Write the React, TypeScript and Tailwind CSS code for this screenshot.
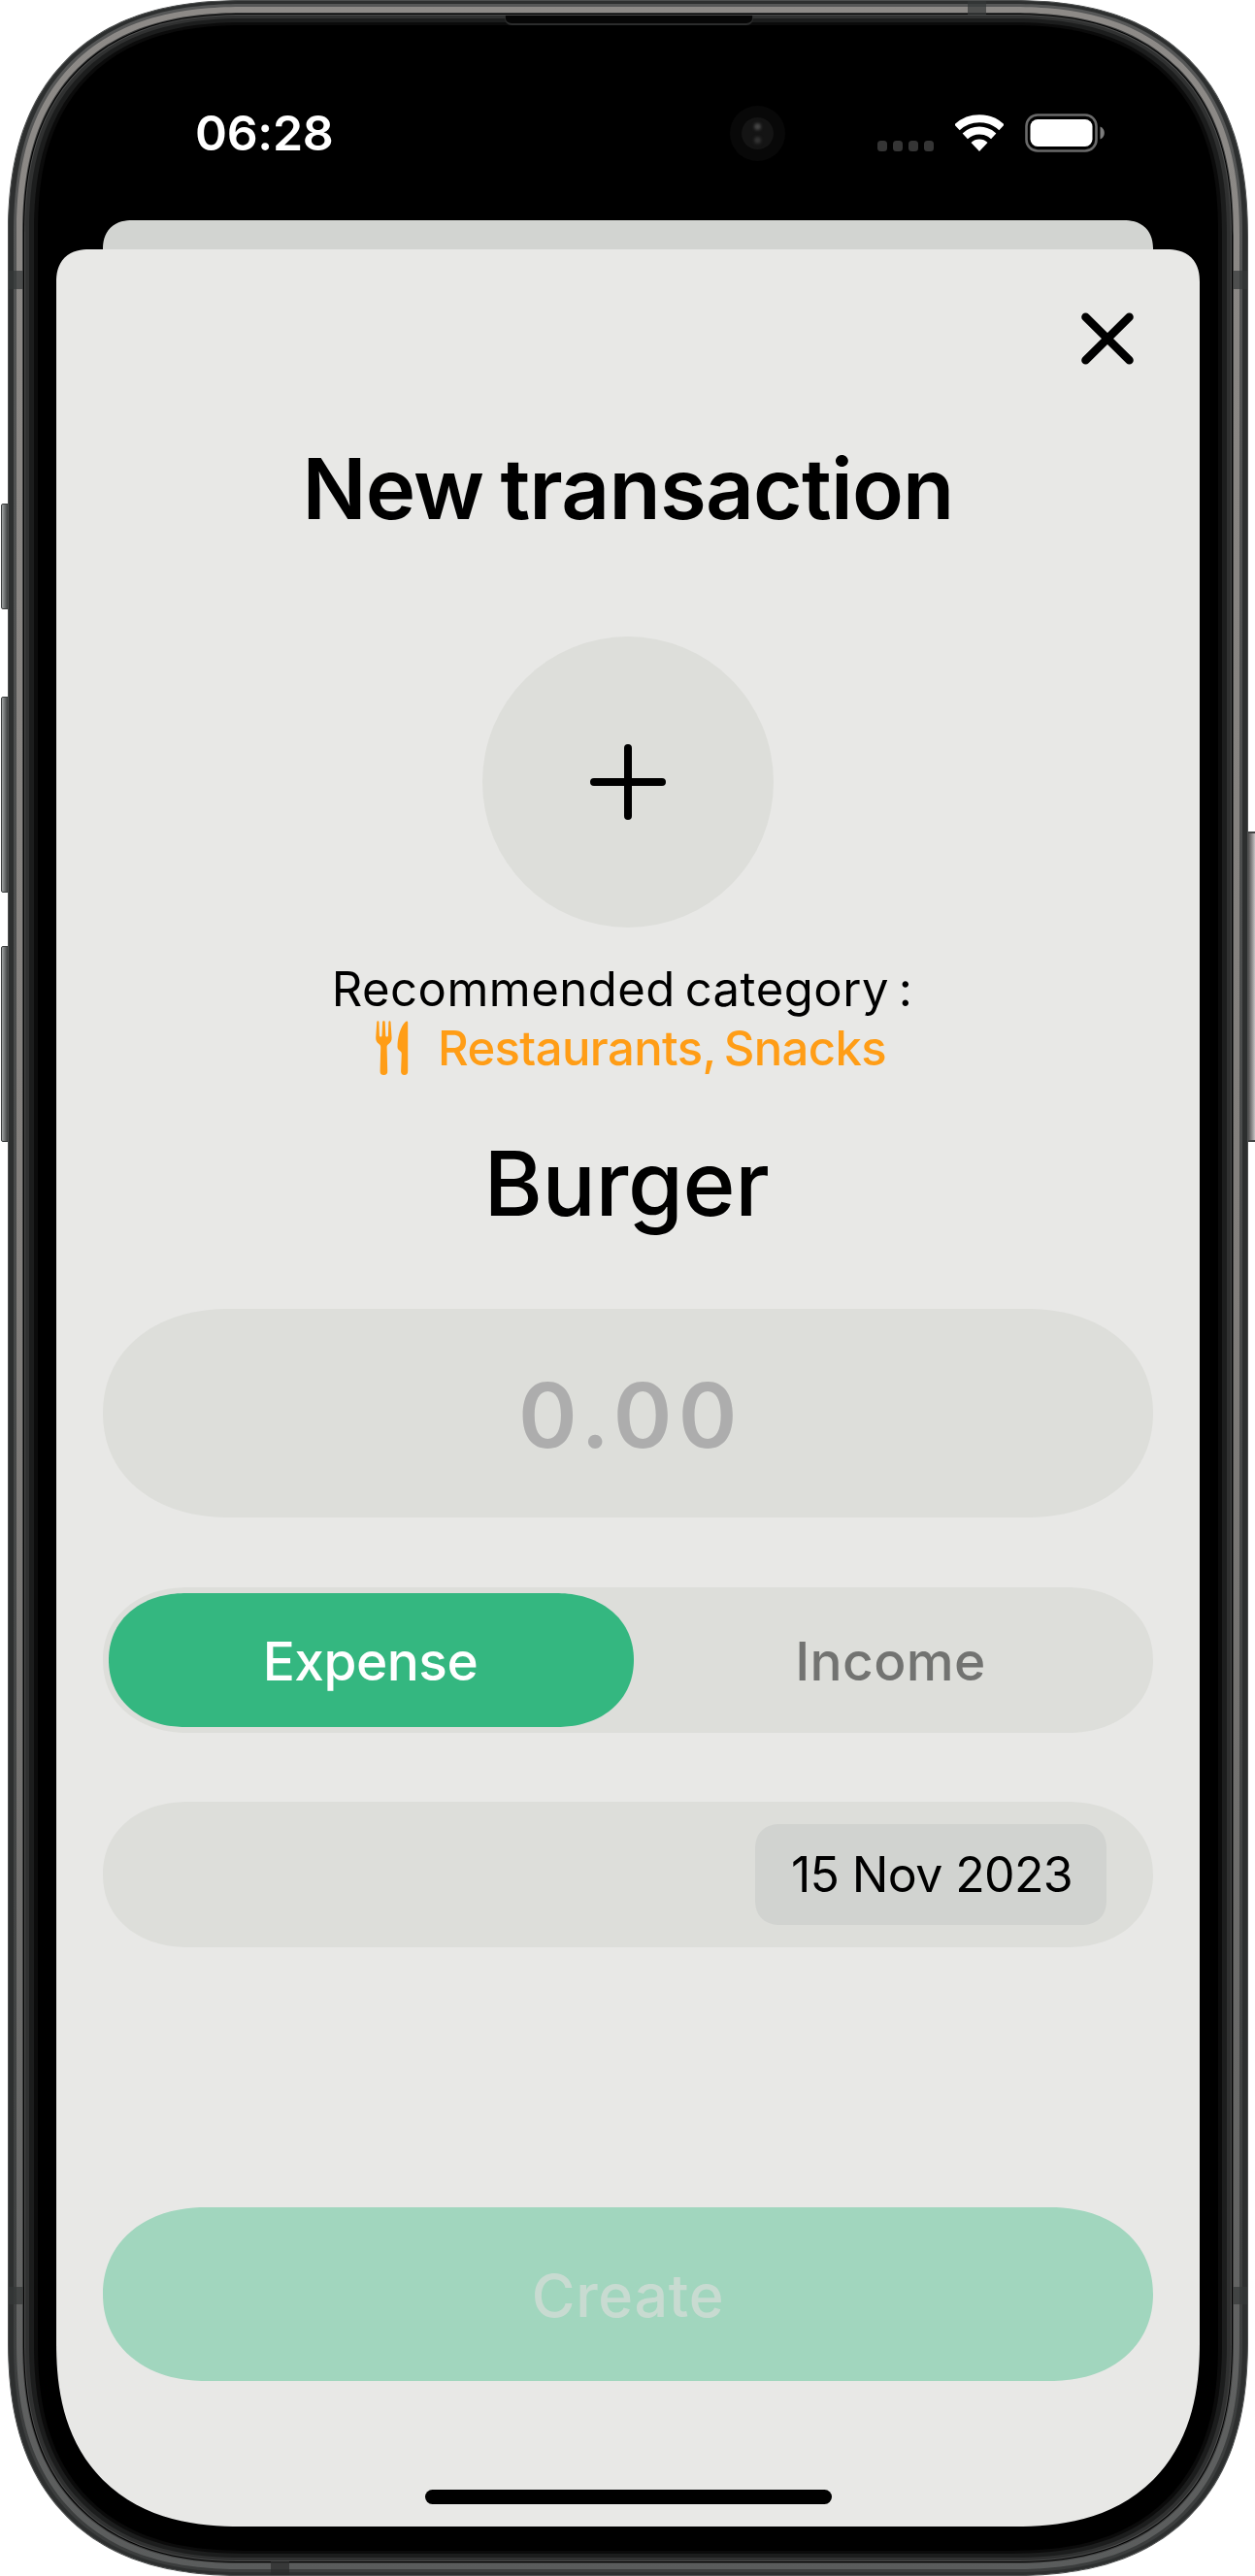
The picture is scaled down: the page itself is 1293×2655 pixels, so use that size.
import type { ReactNode } from "react";

function DeviceFrame({ children }: { children: ReactNode }) {
  return (
    <div className="relative flex h-[2655px] w-[1278px] rounded-[245px] border border-[#4d4f4f] bg-[#2d2f2f] px-[5px] py-[3px] [corner-shape:superellipse(1.28)]">
      <div className="flex w-full rounded-[239px] bg-gradient-to-b from-[#565757] to-[#3b3d3d] p-[3px] [corner-shape:superellipse(1.28)]">
        <div className="flex w-full rounded-[236px] bg-gradient-to-b from-[#8d8a87] via-[#827f7c] to-[#5a5c5c] p-[6px] [corner-shape:superellipse(1.28)]">
          <div className="flex w-full rounded-[230px] bg-[#3c3d3d] p-px [corner-shape:superellipse(1.28)]">
            <div className="flex w-full rounded-[229px] bg-black p-px [corner-shape:superellipse(1.28)]">
              <div className="flex w-full rounded-[228px] bg-[#4a4b4b] p-px [corner-shape:superellipse(1.28)]">
                <div className="flex w-full rounded-[227px] bg-[#303131] px-[4px] py-[3px] [corner-shape:superellipse(1.28)]">
                  <div className="flex w-full rounded-[223px] bg-[#1c1d1d] px-[5px] py-[4px] [corner-shape:superellipse(1.28)]">
                    <div className="flex w-full rounded-[218px] bg-[#0b0b0b] px-[4px] py-[3px] [corner-shape:superellipse(1.28)]">
                      <div className="relative flex w-full flex-col rounded-[214px] bg-black px-[19px] [corner-shape:superellipse(1.28)]">
                        {children}
                      </div>
                    </div>
                  </div>
                </div>
              </div>
            </div>
          </div>
        </div>
      </div>
      {/* antenna bands */}
      <span className="absolute top-[278px] left-0 h-[19px] w-[15px] bg-[#353737]/70" />
      <span className="absolute top-[278px] right-0 h-[19px] w-[15px] bg-[#353737]/70" />
      <span className="absolute top-[2356px] left-0 h-[18px] w-[15px] bg-[#353737]/70" />
      <span className="absolute top-[2356px] right-0 h-[18px] w-[15px] bg-[#353737]/70" />
      <span className="absolute top-0 left-[988px] h-[14px] w-[19px] bg-[#353737]/70" />
      <span className="absolute bottom-0 left-[270px] h-[14px] w-[19px] bg-[#2a2b2b]/70" />
      {/* earpiece */}
      <span className="absolute top-[15px] left-[511px] h-[10px] w-[256px] rounded-b-[7px] border-x border-b-2 border-[#2b2c2c] bg-[#060606]" />
    </div>
  );
}

function WifiIcon() {
  return (
    <svg className="h-[38px] w-[50px]" viewBox="0 0 50 38" fill="none">
      <path d="M1.95 13.3A33.8 33.8 0 0 1 48.05 13.3" stroke="#fff" strokeWidth="8" />
      <path d="M10.3 22.3A21.5 21.5 0 0 1 39.7 22.3" stroke="#fff" strokeWidth="7.8" />
      <path d="M16.5 28.9A12.5 12.5 0 0 1 33.5 28.9L25 38Z" fill="#fff" />
    </svg>
  );
}

function BatteryIcon() {
  return (
    <svg className="h-[40px] w-[82px]" viewBox="0 0 82 40" fill="none">
      <rect x="1.5" y="1.5" width="72" height="37" rx="11.5" stroke="#6a6a6a" strokeWidth="2.6" />
      <rect x="5.5" y="6" width="64" height="28" rx="7.5" fill="#fff" />
      <path d="M77.5 13.5C80.2 14.6 81.8 17 81.8 20S80.2 25.4 77.5 26.5Z" fill="#7c7c7c" />
    </svg>
  );
}

function ForkKnifeIcon() {
  return (
    <svg className="h-[57px] w-[34px]" viewBox="0 0 34 57" fill="#ff9d16">
      <path d="M1.3 1.2C1.4 0 3.3 0 3.4 1.2L3.9 15.4C4 16.8 6.4 16.8 6.5 15.4L7.1 1.2C7.2 0 9.6 0 9.7 1.2L10.3 15.4C10.4 16.8 12.8 16.8 12.9 15.4L13.4 1.2C13.5 0 15.4 0 15.5 1.2L16.6 17.6C16.7 20.8 15.6 22.4 13.4 24C12 25 11.5 25.8 11.6 27.6L12.2 52C12.3 54.6 11 56 8.4 56S4.5 54.6 4.6 52L5.2 27.6C5.3 25.8 4.8 25 3.4 24C1.2 22.4 .1 20.8 .2 17.6Z" />
      <path d="M33.2 2V52C33.2 54.6 32 56 29.6 56S26 54.6 26.1 52L26.8 34.2C26.8 33 26.5 32.2 25.5 31.4L24 30.2C22.9 29.3 22.5 28.4 22.5 26.8C22.6 17.5 25.2 6.5 30.9 1C32.1 -.1 33.2 .4 33.2 2Z" />
    </svg>
  );
}

function StatusBar() {
  return (
    <div className="mt-[91px] mb-[70px] flex h-[40px] items-center justify-between pr-[98px] pl-[143px]">
      <span className="text-[50px] leading-[40px] font-semibold tracking-[-0.3px] text-white">06:28</span>
      <div className="flex items-center gap-[22px]">
        <div className="flex gap-[5.5px] pt-[26px]">
          <i className="h-[11px] w-[10.5px] rounded-[3.5px] bg-[#353535]" />
          <i className="h-[11px] w-[10.5px] rounded-[3.5px] bg-[#353535]" />
          <i className="h-[11px] w-[10.5px] rounded-[3.5px] bg-[#353535]" />
          <i className="h-[11px] w-[10.5px] rounded-[3.5px] bg-[#353535]" />
        </div>
        <WifiIcon />
        <BatteryIcon />
      </div>
      {/* front camera */}
      <div className="absolute top-[83px] left-[713px] flex size-[57px] items-center justify-center rounded-full bg-[#080808]">
        <div className="flex size-[33px] flex-col items-center justify-center gap-[7px] rounded-full bg-[#141414]">
          <i className="size-[7px] rounded-full bg-[#464646] blur-[1.5px]" />
          <i className="size-[7px] rounded-full bg-[#333333] blur-[1.5px]" />
        </div>
      </div>
    </div>
  );
}

export default function App() {
  return (
    <div className="relative h-[2655px] w-[1293px] overflow-hidden bg-white pl-2 font-['Inter',sans-serif] text-black">
      {/* hardware buttons */}
      <span className="absolute top-[519px] left-[1px] h-[109px] w-[8px] rounded-l-[2px] border border-[#3c3e3e] bg-gradient-to-r from-[#a3a6a6] to-[#3d3f3f]" />
      <span className="absolute top-[718px] left-[1px] h-[202px] w-[8px] rounded-l-[2px] border border-[#3c3e3e] bg-gradient-to-r from-[#a3a6a6] to-[#3d3f3f]" />
      <span className="absolute top-[975px] left-[1px] h-[202px] w-[8px] rounded-l-[2px] border border-[#3c3e3e] bg-gradient-to-r from-[#a3a6a6] to-[#3d3f3f]" />
      <span className="absolute top-[857px] right-0 h-[320px] w-[8px] border-y-2 border-[#444545] bg-gradient-to-r from-[#3d3d3d] to-[#c8c5c5]" />

      <DeviceFrame>
        <StatusBar />
        <div className="mx-[48px] h-[30px] rounded-t-[30px] bg-[#d2d4d1] [corner-shape:superellipse(1.2)]" />
        <main className="flex h-[2347px] flex-col rounded-t-[34px] rounded-b-[190px] bg-[#e8e8e6] px-[48px] pt-[65px] [corner-shape:superellipse(1.25)]">
          <button aria-label="Close" className="mr-[20px] self-end">
            <svg className="size-[54px]" viewBox="0 0 54 54" stroke="#000" strokeWidth="8.6" strokeLinecap="round">
              <path d="M4.5 4.7L49.5 49.3M49.5 4.7L4.5 49.3" />
            </svg>
          </button>

          <h1 className="mt-[78px] text-center text-[87px] leading-[100px] font-semibold tracking-[-0.78px] [word-spacing:-4px]">New transaction</h1>

          <button aria-label="Choose category" className="mt-[102px] flex size-[300px] items-center justify-center self-center rounded-full bg-[#dddeda]">
            <svg className="size-[80px]" viewBox="0 0 80 80" stroke="#000" strokeWidth="8" strokeLinecap="round">
              <path d="M40 5V75M5 40H75" />
            </svg>
          </button>

          <div className="mt-[33px] flex flex-col items-center text-[49px] leading-[61px]">
            <p className="pr-[12px] tracking-[0.5px] [word-spacing:-4.5px]">Recommended category :</p>
            <div className="flex items-center gap-[30px] pl-[6px] text-[#ff9d16]">
              <ForkKnifeIcon />
              <span className="font-medium tracking-[-0.6px] [word-spacing:-4px]">Restaurants, Snacks</span>
            </div>
          </div>

          <h2 className="mt-[54px] pr-[3px] text-center text-[92px] leading-[110px] font-medium tracking-[-0.4px]">Burger</h2>

          <div className="mt-[74px] flex h-[215px] shrink-0 items-center justify-center rounded-[130px/108px] bg-[#dddeda] pt-[4px] pl-[6px] text-[92px] leading-none font-semibold tracking-[6.4px] text-[#adadad] [corner-shape:superellipse(1.1)]">
            0.00
          </div>

          <div className="mt-[72px] flex h-[150px] shrink-0 items-stretch rounded-[88px/75px] bg-[#dddeda] p-[6px] text-[55px] leading-none font-medium [corner-shape:superellipse(1.1)]">
            <button className="flex w-[541px] items-center justify-center rounded-[80px/69px] bg-[#34b780] pt-[2px] pr-[2px] tracking-[-0.5px] text-white [corner-shape:superellipse(1.1)]">
              Expense
            </button>
            <button className="flex flex-1 items-center justify-center pt-[2px] tracking-[0.4px] text-[#727371]">Income</button>
          </div>

          <div className="mt-[71px] flex h-[150px] shrink-0 items-center justify-end rounded-[88px/75px] bg-[#dddeda] pr-[48px] [corner-shape:superellipse(1.1)]">
            <span className="flex h-[104px] w-[362px] items-center justify-center rounded-[26px] bg-[#d1d3d0] pl-[2px] text-[50px] leading-none tracking-[-0.62px] [corner-shape:superellipse(1.2)]">
              15 Nov 2023
            </span>
          </div>

          <button className="mt-[268px] flex h-[179px] shrink-0 items-center justify-center rounded-[106px/90px] bg-[#a1d6be] pt-[3px] text-[61px] leading-none font-medium tracking-[0.7px] text-[#c8dbd1] [corner-shape:superellipse(1.1)]">
            Create
          </button>

          <div className="mt-[112px] h-[15px] w-[419px] shrink-0 self-center rounded-full bg-black" />
        </main>
      </DeviceFrame>
    </div>
  );
}
